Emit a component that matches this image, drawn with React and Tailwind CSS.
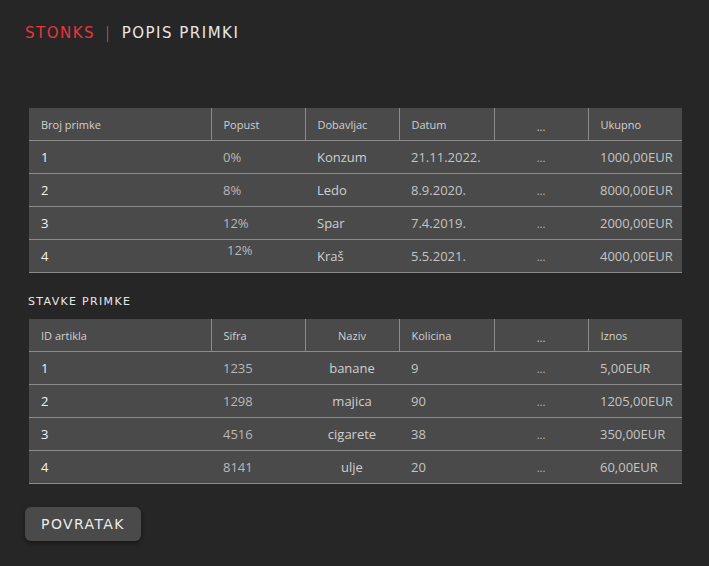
const primke = [
  { id: '1', popust: '0%', dob: 'Konzum', datum: '21.11.2022.', ukupno: '1000,00EUR' },
  { id: '2', popust: '8%', dob: 'Ledo', datum: '8.9.2020.', ukupno: '8000,00EUR' },
  { id: '3', popust: '12%', dob: 'Spar', datum: '7.4.2019.', ukupno: '2000,00EUR' },
  { id: '4', popust: '12%', dob: 'Kraš', datum: '5.5.2021.', ukupno: '4000,00EUR', odd: true },
];

const stavke = [
  { id: '1', sifra: '1235', naziv: 'banane', kol: '9', iznos: '5,00EUR' },
  { id: '2', sifra: '1298', naziv: 'majica', kol: '90', iznos: '1205,00EUR' },
  { id: '3', sifra: '4516', naziv: 'cigarete', kol: '38', iznos: '350,00EUR' },
  { id: '4', sifra: '8141', naziv: 'ulje', kol: '20', iznos: '60,00EUR' },
];

const tech = { fontFamily: '"DejaVu Sans", "Liberation Sans", sans-serif' };

const Head = ({ cols }) => (
  <thead>
    <tr className="h-[33px] border-b border-[#8c8c8c]">
      {cols.map((c, i) => (
        <th
          key={i}
          className={`font-normal text-[11px] text-[#d0d0d0] px-3 pt-[3px] ${c.center ? 'text-center' : 'text-left'} ${
            i > 0 ? 'border-l border-[#8c8c8c]' : ''
          }`}
        >
          {c.label === '...' ? <span className="relative top-[2px]">...</span> : c.label}
        </th>
      ))}
    </tr>
  </thead>
);

const Dots = () => <td className="text-center text-[11px] text-[#bdbdbd] align-middle"><span className="relative top-[1px]">...</span></td>;

const colWidths = ['w-[182px]', 'w-[94px]', 'w-[94px]', 'w-[95px]', 'w-[94px]', 'w-[94px]'];

const Cols = () => (
  <colgroup>
    {colWidths.map((w, i) => <col key={i} className={w} />)}
  </colgroup>
);

export default function App() {
  return (
    <div className="min-h-[566px] w-full bg-[#262626] pt-[22px] pb-6" style={{ fontFamily: '"Open Sans", "Liberation Sans", sans-serif' }}>
      <div className="flex items-center pl-[25px] text-[15px] tracking-[0.1em] uppercase" style={tech}>
        <span className="text-[#e8353f]">Stonks</span>
        <span className="text-[#8a8a8a] ml-[10px] mr-[10px] font-light">|</span>
        <span className="text-[#e6e6e6]">Popis primki</span>
      </div>

      <table className="ml-[29px] mt-[63px] w-[653px] table-fixed border-collapse bg-[#4a4a4a]">
        <Cols />
        <Head
          cols={[
            { label: 'Broj primke' },
            { label: 'Popust' },
            { label: 'Dobavljac' },
            { label: 'Datum' },
            { label: '...', center: true },
            { label: 'Ukupno' },
          ]}
        />
        <tbody className="text-[13px]">
          {primke.map((r) => (
            <tr key={r.id} className="h-[33px] border-b border-[#8c8c8c]">
              <td className="px-3 pt-[2px] text-[#f2f2f2]">{r.id}</td>
              <td className="px-3 pt-[2px] text-[#b8b8b8]">
                {r.odd ? <span className="relative -top-[6px] left-[4px]">{r.popust}</span> : r.popust}
              </td>
              <td className="px-3 pt-[2px] text-[#cfcfcf]">{r.dob}</td>
              <td className="px-3 pt-[2px] text-[#c4c4c4]">{r.datum}</td>
              <Dots />
              <td className="px-3 pt-[2px] text-[#c4c4c4]">{r.ukupno}</td>
            </tr>
          ))}
        </tbody>
      </table>

      <div className="ml-[28px] mt-[21px] text-[11px] tracking-[0.12em] uppercase text-[#e6e6e6]" style={tech}>
        Stavke primke
      </div>

      <table className="ml-[29px] mt-[8px] w-[653px] table-fixed border-collapse bg-[#4a4a4a]">
        <Cols />
        <Head
          cols={[
            { label: 'ID artikla' },
            { label: 'Sifra' },
            { label: 'Naziv', center: true },
            { label: 'Kolicina' },
            { label: '...', center: true },
            { label: 'Iznos' },
          ]}
        />
        <tbody className="text-[13px]">
          {stavke.map((r) => (
            <tr key={r.id} className="h-[33px] border-b border-[#8c8c8c]">
              <td className="px-3 pt-[2px] text-[#f2f2f2]">{r.id}</td>
              <td className="px-3 pt-[2px] text-[#b8b8b8]">{r.sifra}</td>
              <td className="px-3 pt-[2px] text-center text-[#cfcfcf]">{r.naziv}</td>
              <td className="px-3 pt-[2px] text-[#c4c4c4]">{r.kol}</td>
              <Dots />
              <td className="px-3 pt-[2px] text-[#c4c4c4]">{r.iznos}</td>
            </tr>
          ))}
        </tbody>
      </table>

      <button
        className="ml-[25px] mt-[23px] h-[34px] w-[116px] rounded-md bg-[#4a4a4a] text-[14px] tracking-[0.1em] uppercase text-[#ececec] shadow-[0_2px_4px_rgba(0,0,0,0.45)]"
        style={tech}
      >
        Povratak
      </button>
    </div>
  );
}
